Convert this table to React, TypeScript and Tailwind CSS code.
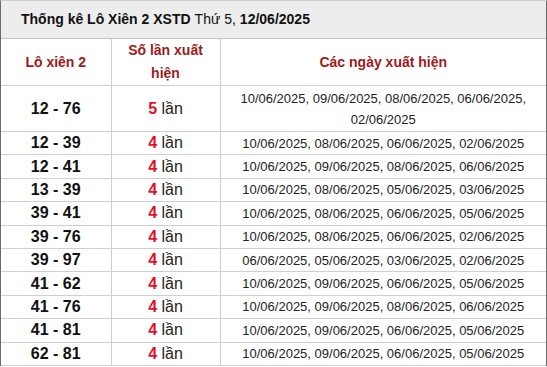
const rows: { pair: string; count: number; dates: string }[] = [
  { pair: '12 - 76', count: 5, dates: '10/06/2025, 09/06/2025, 08/06/2025, 06/06/2025, 02/06/2025' },
  { pair: '12 - 39', count: 4, dates: '10/06/2025, 08/06/2025, 06/06/2025, 02/06/2025' },
  { pair: '12 - 41', count: 4, dates: '10/06/2025, 09/06/2025, 08/06/2025, 06/06/2025' },
  { pair: '13 - 39', count: 4, dates: '10/06/2025, 08/06/2025, 05/06/2025, 03/06/2025' },
  { pair: '39 - 41', count: 4, dates: '10/06/2025, 08/06/2025, 06/06/2025, 05/06/2025' },
  { pair: '39 - 76', count: 4, dates: '10/06/2025, 08/06/2025, 06/06/2025, 02/06/2025' },
  { pair: '39 - 97', count: 4, dates: '06/06/2025, 05/06/2025, 03/06/2025, 02/06/2025' },
  { pair: '41 - 62', count: 4, dates: '10/06/2025, 09/06/2025, 06/06/2025, 05/06/2025' },
  { pair: '41 - 76', count: 4, dates: '10/06/2025, 09/06/2025, 08/06/2025, 06/06/2025' },
  { pair: '41 - 81', count: 4, dates: '10/06/2025, 09/06/2025, 06/06/2025, 05/06/2025' },
  { pair: '62 - 81', count: 4, dates: '10/06/2025, 09/06/2025, 06/06/2025, 05/06/2025' },
]

export default function App() {
  return (
    <div className="h-[367px] w-[547px] overflow-hidden bg-white font-['Liberation_Sans',Arial,sans-serif]">
      <div className="border-x border-t border-l-[#6b6b6b] border-r-[#6b6b6b] border-t-[#d0d0d0]">
        <div className="flex h-[38px] items-center border-b border-[#c4c4c4] bg-[#ededed] pl-[20px] text-[14px] text-[#111]">
          <span className="font-bold">Thống kê Lô Xiên 2 XSTD</span>
          <span className="ml-[4px]">Thứ 5,</span>
          <span className="ml-[4px] font-bold">12/06/2025</span>
        </div>
        <table className="w-full border-collapse text-center">
          <colgroup>
            <col className="w-[110px]" />
            <col className="w-[109px]" />
            <col />
          </colgroup>
          <thead>
            <tr className="h-[45px] text-[14px] font-bold text-[#9e1a1a]">
              <th className="border-b border-r border-[#cfcfcf]">Lô xiên 2</th>
              <th className="border-b border-r border-[#cfcfcf] leading-[23px]">
                Số lần xuất
                <br />
                hiện
              </th>
              <th className="border-b border-[#cfcfcf]">Các ngày xuất hiện</th>
            </tr>
          </thead>
          <tbody>
            {rows.map((r, i) => (
              <tr key={r.pair} className={i === 0 ? 'h-[46px]' : 'h-[23.4px]'}>
                <td className="border-b border-r border-[#cfcfcf] text-[16px] font-bold leading-[20px] text-[#111]">
                  {r.pair}
                </td>
                <td className="border-b border-r border-[#cfcfcf] text-[16px] leading-[20px] text-[#222]">
                  <span className="font-bold text-[#e3102b]">{r.count}</span> lần
                </td>
                <td className="border-b border-[#cfcfcf] px-[2px] text-[13px] leading-[21px] text-[#222]">
                  {r.dates}
                </td>
              </tr>
            ))}
          </tbody>
        </table>
      </div>
    </div>
  )
}
